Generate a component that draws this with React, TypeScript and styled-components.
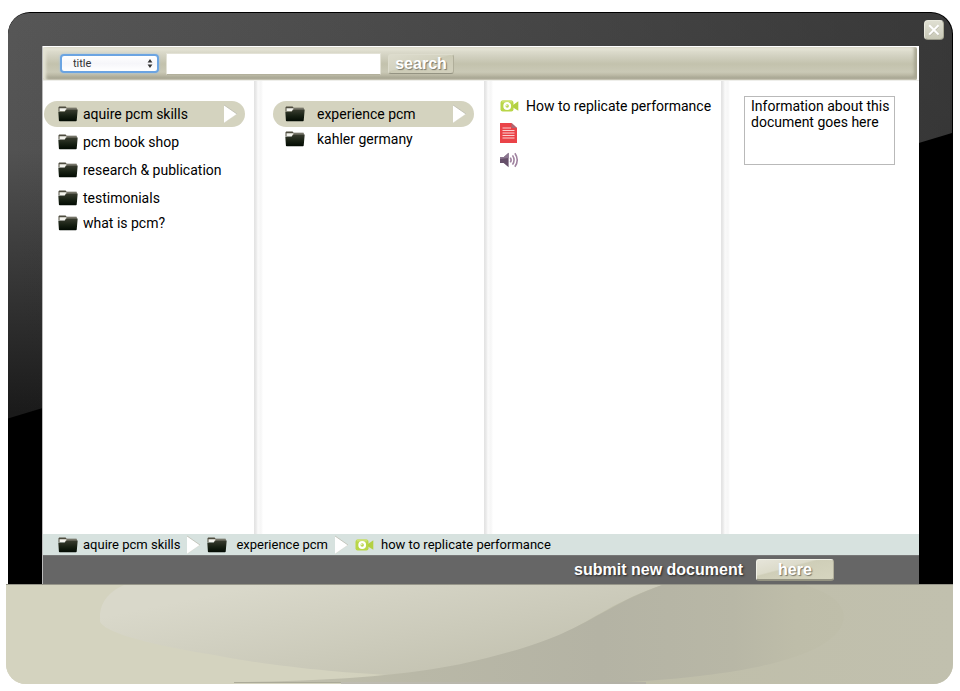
import React, { useState } from "react";
import styled, { createGlobalStyle } from "styled-components";

const GlobalStyle = createGlobalStyle`
  *, *::before, *::after { box-sizing: border-box; }
  body {
    margin: 0;
    background: #fff;
    color: #000;
    font-family: Roboto, "Noto Sans", sans-serif;
    font-size: 14px;
    line-height: 16px;
  }
  button, input, select, textarea { font: inherit; color: inherit; }
`;

const Page = styled.div`
  display: flex;
  flex-direction: column;
  min-height: 100vh;
  padding: 12px 7px 7px 6px;
`;

const Bezel = styled.div`
  position: relative;
  flex: 1;
  display: flex;
  flex-direction: column;
  margin-left: 2px;
  padding: 34px 34px 0;
  border-radius: 22px 22px 0 0;
  background: #000;
  overflow: hidden;

  &::before {
    content: "";
    position: absolute;
    inset: 1px 1px 0 0;
    border-radius: 21px 21px 0 0;
    background:
      linear-gradient(90deg, transparent 0%, rgba(36, 36, 36, 0.6) 100%),
      linear-gradient(180deg, #575757 0%, #525252 24%, #1a1a1a 70%);
    clip-path: polygon(0 0, 100% 0, 100% 21%, 0 71%);
  }
`;

const CloseButton = styled.button`
  position: absolute;
  top: 8px;
  right: 9px;
  display: flex;
  align-items: center;
  justify-content: center;
  width: 20px;
  height: 20px;
  padding: 0;
  border: 1px solid #e9e9dd;
  border-right-color: #a9a995;
  border-bottom-color: #99998a;
  border-radius: 4px;
  background: linear-gradient(#dfdfd2, #c8c8b6);
`;

const Screen = styled.main`
  position: relative;
  flex: 1;
  display: flex;
  flex-direction: column;
  background: #fff;
  border-left: 1px solid #bbb;
`;

const Toolbar = styled.form`
  display: flex;
  align-items: center;
  gap: 7px;
  height: 33px;
  margin: 1px 2px 0 0;
  padding: 0 17px;
  border-radius: 2px;
  background: linear-gradient(
    #f2f0e4 0,
    #dddccd 4px,
    #d0cfbe 10px,
    #c3c2ad 17px,
    #cac9b6 25px,
    #bcbaa6 28px,
    #a19f8c 32px,
    #c9c8bd 33px
  );
  box-shadow: inset 3px 0 3px #e4e3d4, inset -3px 0 3px #a8a692;
`;

const FieldPicker = styled.div`
  position: relative;
  display: flex;

  svg {
    position: absolute;
    right: 6px;
    top: 5px;
    pointer-events: none;
  }
`;

const FieldSelect = styled.select`
  appearance: none;
  width: 99px;
  height: 19px;
  padding: 1px 11px 0;
  border: 2px solid #6ba4e2;
  border-radius: 4px;
  outline: none;
  background: linear-gradient(#fff, #f6f6fa 50%, #fff);
  box-shadow: 0 0 2px #9cc4f0;
  color: #333;
  font-size: 11px;
  line-height: 14px;
`;

const SearchInput = styled.input`
  width: 215px;
  height: 22px;
  padding: 0 6px;
  border: 1px solid #e3e2d6;
  border-bottom-color: #b2b09c;
  background: #fff;
`;

const BevelButton = styled.button<{ $wide?: boolean }>`
  min-width: ${(p) => (p.$wide ? 78 : 66)}px;
  height: ${(p) => (p.$wide ? 22 : 20)}px;
  padding: 0 5px;
  border: 1px solid ${(p) => (p.$wide ? "#f0f0e6" : "#dddccd")};
  border-right-color: #b0ae9a;
  border-bottom: ${(p) => (p.$wide ? "2px solid #949382" : "1px solid #949382")};
  border-radius: 3px;
  background: ${(p) =>
    p.$wide
      ? "linear-gradient(165deg, #e6e5da 0%, #dcdbca 38%, #cfceb8 42%, #d6d5bf 100%)"
      : "linear-gradient(165deg, #dddccd 0%, #d3d2c0 45%, #cccbb6 48%, #d2d0bd 100%)"};
  color: #fff;
  font: bold 16px/16px "Liberation Sans", Arial, sans-serif;
  text-shadow: 1px 1px 1px #77766a;
`;

const Columns = styled.div`
  flex: 1;
  display: grid;
  grid-template-columns: 211fr 230fr 237fr 198fr;
`;

const Column = styled.section<{ $divided?: boolean; $pad: string }>`
  min-width: 0;
  padding: ${(p) => p.$pad};
  border-top: 1px solid #eeeeea;
  background: ${(p) =>
    p.$divided
      ? "linear-gradient(90deg, #e2e2e2 0, #e9e9e9 2px, #fafafa 4px, #f6f6f6 7px, #fff 9px) no-repeat"
      : "#fff"};
`;

const FolderList = styled.ul`
  display: flex;
  flex-direction: column;
  margin: 0;
  padding: 0;
  list-style: none;

  li + li { margin-top: 2px; }
  li:last-child { margin-top: -1px; }
`;

const FolderRow = styled.button<{ $active?: boolean; $gap: number; $inset: number }>`
  display: flex;
  align-items: center;
  gap: ${(p) => p.$gap}px;
  width: 100%;
  max-width: 201px;
  height: 26px;
  padding: 0 7px 0 ${(p) => p.$inset}px;
  border: 0;
  border-radius: 13px;
  background: ${(p) => (p.$active ? "#d4d3bf" : "transparent")};
  text-align: left;
  white-space: nowrap;

  svg:last-child:not(:first-child) { margin-left: auto; }
`;

const FileList = styled.ul`
  display: flex;
  flex-direction: column;
  gap: 7px;
  margin: 0;
  padding: 0;
  list-style: none;
`;

const FileRow = styled.button`
  display: flex;
  align-items: center;
  gap: 7px;
  height: 20px;
  padding: 0;
  border: 0;
  background: none;
  white-space: nowrap;
`;

const InfoBox = styled.textarea`
  display: block;
  width: 100%;
  max-width: 151px;
  height: 69px;
  padding: 1px 0 0 6px;
  border: 1px solid #b9b9b9;
  outline: none;
  resize: none;
  background: #fff;
  line-height: 16px;
`;

const Trail = styled.nav`
  display: flex;
  align-items: center;
  height: 21px;
  padding-left: 15px;
  background: #d7e2df;
`;

const Crumb = styled.a<{ $gap: number }>`
  display: flex;
  align-items: center;
  gap: ${(p) => p.$gap}px;
  color: #000;
  font-size: 13px;
  text-decoration: none;
  white-space: nowrap;
`;

const CrumbArrow = styled.span`
  display: flex;
  margin: 0 6px;
`;

const SubmitBar = styled.footer`
  display: flex;
  align-items: center;
  justify-content: flex-end;
  gap: 13px;
  height: 29px;
  padding-right: 85px;
  border-top: 1px solid #777;
  background: #666;
`;

const SubmitLabel = styled.span`
  color: #fff;
  font: bold 16px/18px "Liberation Sans", Arial, sans-serif;
  text-shadow: 1px 1px 2px #222;
  white-space: nowrap;
`;

const Base = styled.div`
  height: 100px;
  border-top: 1px solid #97968a;
  border-radius: 0 0 20px 20px;
  background: #d4d3bf;
  overflow: hidden;

  svg { display: block; width: 100%; height: 100%; }
`;

function FolderIcon() {
  return (
    <svg width="20" height="16" viewBox="0 0 20 16" aria-hidden="true">
      <defs>
        <linearGradient id="folderFront" x1="0" y1="0" x2="0" y2="1">
          <stop offset="0" stopColor="#3a3d30" />
          <stop offset="0.55" stopColor="#172013" />
          <stop offset="1" stopColor="#020a02" />
        </linearGradient>
      </defs>
      <path d="M0.5 1.2 L1.2 0.5 H7.6 L8.6 1.8 H18.6 V5 H0.5Z" fill="#4e4c3f" />
      <path d="M1.5 2.2 H9 L7 5 H1.5Z" fill="#f4f4ee" />
      <path d="M8.6 2.2 H18.6 V4 H7.6Z" fill="#858378" />
      <path d="M0.3 5.4 H6.6 L9 3.4 H19.7 L18.7 14.6 Q18.6 15.3 18 15.3 H1.7 Q1 15.3 0.9 14.6Z" fill="url(#folderFront)" />
    </svg>
  );
}

function ArrowIcon() {
  return (
    <svg width="15" height="20" viewBox="0 0 15 20" aria-hidden="true">
      <path d="M1 1 L14 10 L1 19Z" fill="#fff" />
      <path d="M1 1 L14 10" stroke="#b5b4a7" strokeWidth="0.7" />
      <path d="M14 10 L1 19" stroke="#d0cfc2" strokeWidth="0.4" />
    </svg>
  );
}

function VideoIcon() {
  return (
    <svg width="19" height="14" viewBox="0 0 19 14" aria-hidden="true">
      <rect x="0.5" y="1.5" width="13" height="11" rx="2.2" fill="#b9d648" />
      <rect x="1.5" y="1.5" width="11" height="2" rx="1" fill="#cde26f" />
      <path d="M13 6 L18.3 2.2 V11.8 L13 8.5Z" fill="#b3d041" />
      <circle cx="7.2" cy="7" r="3.9" fill="#fff" />
      <circle cx="7.2" cy="7" r="1.7" fill="#b9d550" />
      <circle cx="6.8" cy="6.6" r="0.6" fill="#fff" />
    </svg>
  );
}

function DocumentIcon() {
  return (
    <svg width="18" height="20" viewBox="0 0 18 20" aria-hidden="true">
      <path d="M0 0 H11.5 L17 5 V20 H0Z" fill="#ea4348" />
      <path d="M11.5 0 L17 5 H12.4 Q11.5 5 11.5 4Z" fill="#a86a74" />
      <path d="M2.5 5 H11 M2.5 7.5 H14.5 M2.5 10 H14.5 M2.5 12.5 H14.5 M2.5 15 H14.5" stroke="#fbd0d0" strokeWidth="1.2" />
    </svg>
  );
}

function SoundIcon() {
  return (
    <svg width="19" height="16" viewBox="0 0 19 16" aria-hidden="true">
      <path d="M0 5.2 H3.6 L8.6 0.8 V15.2 L3.6 11 H0Z" fill="#66506a" />
      <path d="M3.6 5.2 L8.6 0.8 V6 L0 7V5.2Z" fill="#8b7690" />
      <g fill="none" stroke="#a083a0" strokeWidth="1.6">
        <path d="M10.3 5.6 Q12 8 10.3 10.4" />
        <path d="M12.5 3.4 Q15.6 8 12.5 12.6" />
        <path d="M14.9 1.2 Q19.6 8 14.9 14.8" />
      </g>
    </svg>
  );
}

function StepperIcon() {
  return (
    <svg width="6" height="9" viewBox="0 0 6 9" aria-hidden="true">
      <path d="M3 0 L5.4 3.4 H0.6Z M3 9 L0.6 5.6 H5.4Z" fill="#333" />
    </svg>
  );
}

function CrossIcon() {
  return (
    <svg width="12" height="12" viewBox="0 0 12 12" aria-hidden="true">
      <path d="M1.8 2.3 L10.8 11.3 M10.8 2.3 L1.8 11.3" stroke="#b4b3a4" strokeWidth="1.4" />
      <path d="M1.2 1.2 L10.6 10.6 M10.6 1.2 L1.2 10.6" stroke="#fff" strokeWidth="2" />
    </svg>
  );
}

function BaseReflections() {
  return (
    <svg viewBox="0 0 947 100" preserveAspectRatio="none" aria-hidden="true">
      <defs>
        <linearGradient id="baseFill" x1="0" x2="1" y1="0" y2="0">
          <stop offset="0.35" stopColor="#d4d3bf" />
          <stop offset="0.65" stopColor="#bfbea9" />
          <stop offset="1" stopColor="#c1c0ae" />
        </linearGradient>
        <linearGradient id="lightFill" gradientUnits="userSpaceOnUse" x1="300" y1="-10" x2="325" y2="110">
          <stop offset="0" stopColor="#d9d8ca" />
          <stop offset="1" stopColor="#c5c4b3" />
        </linearGradient>
        <linearGradient id="darkFill" x1="0" x2="1" y1="0" y2="0">
          <stop offset="0" stopColor="#c3c2af" />
          <stop offset="0.3" stopColor="#b9b8a7" />
          <stop offset="0.6" stopColor="#b4b3a4" />
          <stop offset="0.82" stopColor="#b8b7a6" />
          <stop offset="0.92" stopColor="#bebda9" />
          <stop offset="1" stopColor="#bfbeaa" />
        </linearGradient>
      </defs>
      <rect width="947" height="100" fill="url(#baseFill)" />
      <path d="M118 0 Q96 10 94 29 V37 C102 52 170 64 204 70 C270 83 340 89 384 91 C460 84 530 63 554 51 C590 33 610 16 656 0Z" fill="url(#lightFill)" />
      <path d="M228 98 C330 97 400 91 454 80 C500 70 530 60 554 50 C592 33 612 16 656 0 H799 C832 10 846 26 833 46 C812 74 740 91 621 98Z" fill="url(#darkFill)" />
      <path d="M228 98.5 H335" stroke="#aaa998" />
      <path d="M335 99 H640" stroke="#a7a4a3" />
    </svg>
  );
}

const topics = ["aquire pcm skills", "pcm book shop", "research & publication", "testimonials", "what is pcm?"];
const subjects = ["experience pcm", "kahler germany"];

interface FoldersProps {
  items: string[];
  gap: number;
  inset: number;
}

function Folders({ items, gap, inset }: FoldersProps) {
  const [active, setActive] = useState(0);
  return (
    <FolderList>
      {items.map((name, i) => (
        <li key={name}>
          <FolderRow type="button" $active={i === active} $gap={gap} $inset={inset} onClick={() => setActive(i)}>
            <FolderIcon />
            <span>{name}</span>
            {i === active && <ArrowIcon />}
          </FolderRow>
        </li>
      ))}
    </FolderList>
  );
}

export default function App() {
  return (
    <>
      <GlobalStyle />
      <Page>
        <Bezel>
          <CloseButton type="button" aria-label="Close">
            <CrossIcon />
          </CloseButton>
          <Screen>
            <Toolbar onSubmit={(e) => e.preventDefault()}>
              <FieldPicker>
                <FieldSelect aria-label="Search field" defaultValue="title">
                  <option value="title">title</option>
                </FieldSelect>
                <StepperIcon />
              </FieldPicker>
              <SearchInput type="text" aria-label="Search text" />
              <BevelButton type="submit">search</BevelButton>
            </Toolbar>
            <Columns>
              <Column $pad="20px 8px 0 1px">
                <Folders items={topics} gap={5} inset={14} />
              </Column>
              <Column $divided $pad="20px 8px 0 19px">
                <Folders items={subjects} gap={12} inset={12} />
              </Column>
              <Column $divided $pad="15px 8px 0 16px">
                <FileList>
                  <li>
                    <FileRow type="button">
                      <VideoIcon />
                      <span>How to replicate performance</span>
                    </FileRow>
                  </li>
                  <li>
                    <FileRow type="button" aria-label="Document">
                      <DocumentIcon />
                    </FileRow>
                  </li>
                  <li>
                    <FileRow type="button" aria-label="Audio">
                      <SoundIcon />
                    </FileRow>
                  </li>
                </FileList>
              </Column>
              <Column $divided $pad="15px 8px 0 23px">
                <InfoBox
                  readOnly
                  aria-label="Document information"
                  defaultValue="Information about this document goes here"
                />
              </Column>
            </Columns>
            <Trail aria-label="Breadcrumb">
              <Crumb href="#skills" $gap={5}>
                <FolderIcon />
                aquire pcm skills
              </Crumb>
              <CrumbArrow>
                <ArrowIcon />
              </CrumbArrow>
              <Crumb href="#experience" $gap={9}>
                <FolderIcon />
                experience pcm
              </Crumb>
              <CrumbArrow>
                <ArrowIcon />
              </CrumbArrow>
              <Crumb href="#replicate" $gap={7}>
                <VideoIcon />
                how to replicate performance
              </Crumb>
            </Trail>
            <SubmitBar>
              <SubmitLabel id="submit-label">submit new document</SubmitLabel>
              <BevelButton type="button" $wide aria-describedby="submit-label">
                here
              </BevelButton>
            </SubmitBar>
          </Screen>
        </Bezel>
        <Base>
          <BaseReflections />
        </Base>
      </Page>
    </>
  );
}
